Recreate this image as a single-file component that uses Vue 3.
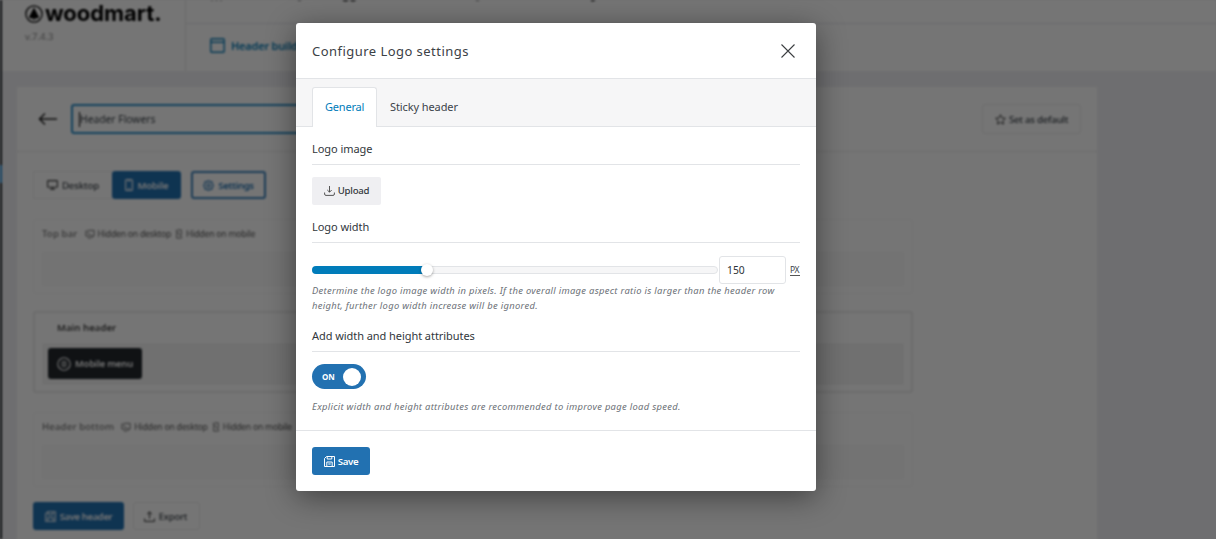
<script setup>
const headerRows = [
  { title: 'Top bar', cls: 'row-top', hidden: true },
  { title: 'Main header', cls: 'row-main', hidden: false },
  { title: 'Header bottom', cls: 'row-bottom', hidden: true },
]
const logoWidth = 150
const sliderFill = 28.3
</script>

<template>
  <div class="screen">
    <div class="page">
      <div class="wp-menu"><i></i></div>
      <div class="main">
        <header class="top">
          <div class="brand">
            <div class="logo">
              <svg width="18" height="18" viewBox="0 0 18 18"><circle cx="9" cy="9" r="8.100" fill="none" stroke="#000" stroke-width="1.300" /><path d="M9 2.600 3.800 12.400c2 .9 3.200 1 4.700 1V15h1v-1.600c1.500 0 2.700-.1 4.700-1z" /></svg>
              <span>woodmart.</span>
            </div>
            <div class="ver">v.7.4.3</div>
          </div>
          <div class="nav">
            <div class="nav-upper">
              <svg width="420" height="3" viewBox="0 0 420 3" fill="none" stroke="#222" stroke-width="1.300"><path d="M26 0v1M30.500 0v1M35 0v1" stroke-width="1" opacity=".7" /><path d="M112 0q1.500 1 3 0M290 0q1.500 1 3 0" opacity=".5" /><path d="M157 0q2.500 1.600 5 0M164.500 0q2.500 1.600 5 0M405 .6h2.500L409 0" /></svg>
            </div>
            <div class="nav-lower">
              <svg width="15" height="15" viewBox="0 0 15 15" fill="none" stroke="#0a7db8" stroke-width="1.400"><rect x=".8" y=".8" width="13.400" height="13.400" rx="1" /><path d="M1 4.300h13" /></svg>
              <span>Header builder</span>
            </div>
          </div>
        </header>
        <section class="card">
          <div class="card-head">
            <svg width="20" height="14" viewBox="0 0 20 14" fill="none" stroke="#222" stroke-width="1.500"><path d="M19 7H1.500M7 1.500 1.500 7 7 12.500" /></svg>
            <div class="name"><b></b><span>Header Flowers</span></div>
            <div class="btn default">
              <svg width="11" height="11" viewBox="0 0 12 12" fill="none" stroke="#333" stroke-width="1"><path d="m6 .8 1.600 3.400 3.700.5-2.700 2.600.7 3.700L6 9.200 2.700 11l.7-3.700L.7 4.700l3.700-.5z" /></svg>
              <span>Set as default</span>
            </div>
          </div>
          <div class="devices">
            <div class="group">
              <div class="dev desktop">
                <svg width="11" height="10" viewBox="0 0 11 10" fill="none" stroke="#333" stroke-width="1.100"><rect x=".6" y=".6" width="9.800" height="6.600" rx=".8" /><path d="M3 9.300h5M5.500 7v2" /></svg>
                <span>Desktop</span>
              </div>
              <div class="dev mobile">
                <svg width="8" height="12" viewBox="0 0 8 12" fill="none" stroke="#fff" stroke-width="1.100"><rect x=".6" y=".6" width="6.800" height="10.800" rx="1" /><path d="M2.800 2h2.400M3 9.800h2" /></svg>
                <span>Mobile</span>
              </div>
            </div>
            <div class="dev settings">
              <svg width="11" height="11" viewBox="0 0 11 11" fill="none" stroke="#2271b1" stroke-width="1.100"><path d="M5.500.6 7 1.600l1.900.2.4 1.900 1.100 1.800-1.100 1.800-.4 1.900-1.900.2-1.500 1-1.500-1-1.900-.2-.4-1.900L.6 5.500l1.100-1.800.4-1.900L4 1.600z" /><circle cx="5.500" cy="5.500" r="1.700" /></svg>
              <span>Settings</span>
            </div>
          </div>
          <div v-for="row in headerRows" :key="row.title" class="hrow" :class="row.cls">
            <div class="hrow-title">
              <strong>{{ row.title }}</strong>
              <template v-if="row.hidden">
                <svg class="hd" width="10" height="10" viewBox="0 0 11 10" fill="none" stroke="#555" stroke-width=".9"><path d="M3 1h7v6.200H7M1 2v5.200h4M1 1l7.500 8M3 9.300h4" /></svg>
                <em>Hidden on desktop</em>
                <svg class="hm" width="8" height="10" viewBox="0 0 8 11" fill="none" stroke="#555" stroke-width=".9"><path d="M2 1h4.500v6M1.500 3v7h5M.5 1l7 9" /></svg>
                <em>Hidden on mobile</em>
              </template>
            </div>
            <div class="zone">
              <div v-if="!row.hidden" class="element">
                <svg width="14" height="14" viewBox="0 0 14 14" fill="none" stroke="#fff" stroke-width="1.100"><circle cx="7" cy="7" r="6.200" /><path d="M4.500 4.700h5M4 7h6M4.500 9.300h5" /></svg>
                <span>Mobile menu</span>
              </div>
            </div>
          </div>
          <div class="actions">
            <div class="save-header">
              <svg width="11" height="11" viewBox="0 0 12 12" fill="none" stroke="#fff" stroke-width="1.100"><path d="M3 .7h8.300v10.600H.7V3zM3.500 1v3h5V1M3.200 11V7h5.600v4" /></svg>
              <span>Save header</span>
            </div>
            <div class="export">
              <svg width="11" height="11" viewBox="0 0 11 11" fill="none" stroke="#333" stroke-width="1"><path d="M5.500 7.500V1M3 3.300 5.500.9 8 3.300M.6 7.500v2.900h9.800V7.500" /></svg>
              <span>Export</span>
            </div>
          </div>
        </section>
      </div>
    </div>

    <div class="overlay">
      <div class="modal">
        <div class="m-head">
          <h2>Configure Logo settings</h2>
          <svg width="14" height="14" viewBox="0 0 14 14" fill="none" stroke="#3c3f42" stroke-width="1.100"><path d="m.5.5 13 13m0-13-13 13" /></svg>
        </div>
        <div class="tabs">
          <div class="tab active"><span>General</span></div>
          <div class="tab"><span>Sticky header</span></div>
        </div>
        <div class="m-body">
          <h3>Logo image</h3>
          <div class="upload">
            <svg width="11" height="10" viewBox="0 0 11 10" fill="none" stroke="#444" stroke-width=".9"><path d="M5.500 0v6M3.300 4 5.500 6.200 7.700 4M.6 6.500V8q0 1.400 1.400 1.400h7q1.400 0 1.400-1.400V6.500" /></svg>
            <span>Upload</span>
          </div>
          <h3>Logo width</h3>
          <div class="range">
            <div class="track"><div class="fill" :style="{ width: sliderFill + '%' }"><i></i></div></div>
            <div class="num">{{ logoWidth }}</div>
            <div class="px">PX</div>
          </div>
          <p class="desc"><span>Determine the logo image width in pixels. If the overall image aspect ratio is larger than the header row</span><br><span>height, further logo width increase will be ignored.</span></p>
          <h3 class="h-attr">Add width and height attributes</h3>
          <div class="switch"><span>ON</span><i></i></div>
          <p class="desc last"><span>Explicit width and height attributes are recommended to improve page load speed.</span></p>
        </div>
        <div class="m-foot">
          <div class="save">
            <svg width="11" height="11" viewBox="0 0 11 11" fill="none" stroke="#fff" stroke-width="1"><path d="M2.500.5h8v10H.5v-8zM3.200.7V3h4.600V.7M2.800 10.300V6h5.400v4.300M4.300 8h2.400" /></svg>
            <span>Save</span>
          </div>
        </div>
      </div>
    </div>
  </div>
</template>

<style>
body { overflow: hidden; background: #6f6f71; }
</style>

<style scoped>
* { box-sizing: border-box; }
.screen { position: relative; width: 1216px; height: 539px; overflow: hidden; background: #f0f0f4; font-family: "Noto Sans", "Open Sans", sans-serif; color: #3c434a; }
span, strong, em { white-space: nowrap; }
svg { flex: none; display: block; }
.page { display: flex; width: 1216px; height: 539px; background: #f0f0f4; filter: blur(.85px); }
.wp-menu { width: 2px; background: #1d2327; padding-top: 165px; flex: none; }
.wp-menu i { display: block; width: 2px; height: 18px; background: #2b8fd5; }
.main { flex: 1; min-width: 0; }
.top { display: flex; height: 71px; background: #fff; }
.brand { width: 184px; border-right: 1px solid #e6e6e8; padding: 2px 0 0 23px; flex: none; }
.logo { display: flex; align-items: center; gap: 2px; height: 22px; color: #000; }
.logo svg { margin-top: 2px; }
.logo span { font: 700 22px/22px Inter, sans-serif; letter-spacing: -.05px; }
.ver { font-size: 9.500px; line-height: 12px; margin-top: 7px; color: #8a8a8a; }
.nav { flex: 1; }
.nav-upper { height: 24px; border-bottom: 1px solid #e8e8ea; }
.nav-lower { display: flex; align-items: center; height: 43px; padding-left: 24px; gap: 6px; color: #0a7db8; font-size: 11px; font-weight: 600; letter-spacing: -.22px; }
.card { width: 1080px; height: 460px; margin: 16px 0 0 15px; background: #fff; overflow: hidden; }
.card-head { display: flex; align-items: center; height: 65px; border-bottom: 1px solid #eaeaea; padding: 0 16px 0 21px; }
.name { display: flex; align-items: center; width: 400px; height: 30px; margin-left: 13px; padding-left: 6px; border: 2px solid #2a8fcc; border-radius: 3px; font-size: 10.300px; }
.name b { width: 1px; height: 15px; background: #000; }
.btn.default { display: flex; align-items: center; justify-content: center; gap: 3px; width: 99px; height: 30px; margin-left: auto; border: 1px solid #ececec; border-radius: 3px; font-size: 9.700px; font-weight: 500; letter-spacing: -.26px; }
.devices { display: flex; gap: 10px; padding: 19px 0 0 16px; height: 67px; font-size: 9.700px; font-weight: 500; letter-spacing: -.2px; }
.group { display: flex; height: 28px; }
.dev { display: flex; align-items: center; justify-content: center; height: 28px; gap: 4px; }
.desktop { width: 79px; border: 1px solid #f0f0f0; border-right: 0; }
.mobile { width: 69px; background: #2271b1; color: #fff; border-radius: 3px; gap: 5px; font-weight: 600; }
.settings { width: 75px; border: 2px solid #3f84bd; border-radius: 3px; color: #2271b1; font-weight: 600; letter-spacing: -.4px; }
.hrow { width: 880px; margin-left: 16px; border: 1px solid #f6f6f6; border-radius: 3px; padding: 0 8px; }
.row-top { height: 75px; margin-bottom: 17px; }
.row-bottom { height: 75px; }
.row-main { height: 82px; border: 2px solid #ebebeb; margin-bottom: 19px; padding: 0 7px; }
.hrow-title { display: flex; align-items: center; height: 32px; padding-bottom: 5px; font-size: 9.600px; color: #666; }
.hrow-title strong { font-weight: 500; color: #777; letter-spacing: .15px; }
.hrow-title em { font-style: normal; font-size: 8.700px; color: #555; letter-spacing: -.24px; }
.hrow-title .hd { margin: 0 3px 0 7px; }
.hrow-title .hm { margin: 0 3px 0 4px; }
.row-main .hrow-title { height: 30px; padding: 0 0 1px 15px; }
.row-main strong { color: #444; letter-spacing: .03px; font-weight: 600; }
.zone { height: 34px; background: #fbfbfb; border: 1px solid #f8f8f8; padding: 0 5px; }
.row-main .zone { height: 42px; background: #f3f3f3; padding: 4px 5px; }
.element { display: flex; align-items: center; justify-content: center; gap: 4px; width: 94px; height: 31px; border-radius: 3px; background: #23282d; color: #fff; font-size: 9.400px; font-weight: 600; letter-spacing: -.2px; }
.actions { display: flex; gap: 9px; padding: 15px 0 0 16px; font-size: 9.500px; }
.save-header, .export { display: flex; align-items: center; justify-content: center; gap: 4px; height: 28px; border-radius: 3px; }
.save-header { width: 91px; background: #2271b1; color: #fff; font-weight: 600; letter-spacing: -.37px; }
.export { width: 67px; border: 1px solid #eee; font-weight: 500; letter-spacing: -.2px; padding-right: 2px; }

.overlay { position: absolute; inset: 0; display: flex; justify-content: center; align-items: flex-start; padding-top: 23px; padding-right: 104px; background: rgba(0, 0, 0, .54); }
.modal { width: 520px; height: 468px; border-radius: 3px; background: #fff; box-shadow: 0 6px 30px rgba(0, 0, 0, .45); overflow: hidden; flex: none; }
.m-head { display: flex; align-items: center; justify-content: space-between; height: 56px; padding: 0 21px 0 16px; border-bottom: 1px solid #e2e4e7; }
h2 { margin: 0; font-size: 13px; line-height: 18px; font-weight: 400; color: #3c4146; letter-spacing: .46px; }
.tabs { display: flex; height: 48px; padding: 8px 0 0 16px; background: #f6f6f7; border-bottom: 1px solid #e2e4e7; font-size: 11px; letter-spacing: -.1px; }
.tab { display: flex; align-items: center; height: 39px; padding: 0 13px; }
.tab.active { width: 65px; height: 40px; padding: 0 12px 2px; border: 1px solid #e2e4e7; border-bottom: 0; border-radius: 3px 3px 0 0; background: #fff; color: #007cba; letter-spacing: -.2px; }
.m-body { padding: 12px 16px 0; height: 303px; }
h3 { margin: 0; height: 26px; padding-top: 2px; border-bottom: 1px solid #e2e4e7; font-size: 11px; line-height: 16px; font-weight: 400; color: #32373c; letter-spacing: -.06px; }
.upload { display: flex; align-items: center; justify-content: center; gap: 3px; width: 69px; height: 28px; margin: 12px 0; padding-bottom: 1px; border-radius: 2px; background: #efeff2; font-size: 9.600px; font-weight: 500; color: #32373c; letter-spacing: -.25px; }
.range { display: flex; align-items: center; height: 28px; margin-top: 13px; }
.track { width: 406px; height: 8px; border: 1px solid #e2e4e7; border-radius: 4px; background: #f6f6f7; flex: none; }
.fill { display: flex; justify-content: flex-end; align-items: center; height: 6px; background: #007cba; border-radius: 3px; box-shadow: 0 0 0 1px #007cba; }
.fill i { width: 12px; height: 12px; margin-right: -6px; border-radius: 50%; background: #fff; box-shadow: 0 1px 3px rgba(0, 0, 0, .35); flex: none; }
.num { width: 67px; height: 28px; margin-left: 1px; padding-left: 7px; border: 1px solid #e2e4e7; border-radius: 3px; font-size: 10.300px; line-height: 27px; color: #2c3338; }
.px { margin-left: 4px; width: 10px; font-size: 8.500px; line-height: 10px; border-bottom: 1px solid #555; letter-spacing: -.5px; }
.desc { margin: -1px 0 0; font-size: 9.400px; line-height: 15px; font-style: italic; color: #6c7177; letter-spacing: .31px; }
.h-attr { margin-top: 13px; }
.switch { display: flex; align-items: center; justify-content: space-between; width: 54px; height: 25px; margin-top: 12px; padding: 0 5px 0 10px; border-radius: 13px; background: #2271b1; color: #fff; font-size: 8px; font-weight: 700; letter-spacing: -.2px; }
.switch i { width: 18px; height: 18px; border-radius: 50%; background: #fff; }
.desc.last { margin-top: 10px; }
.m-foot { height: 61px; padding: 16px; border-top: 1px solid #e2e4e7; }
.save { display: flex; align-items: center; justify-content: center; gap: 3px; width: 58px; height: 28px; border-radius: 3px; background: #2271b1; color: #fff; font-size: 9.700px; font-weight: 600; letter-spacing: -.4px; }
</style>
